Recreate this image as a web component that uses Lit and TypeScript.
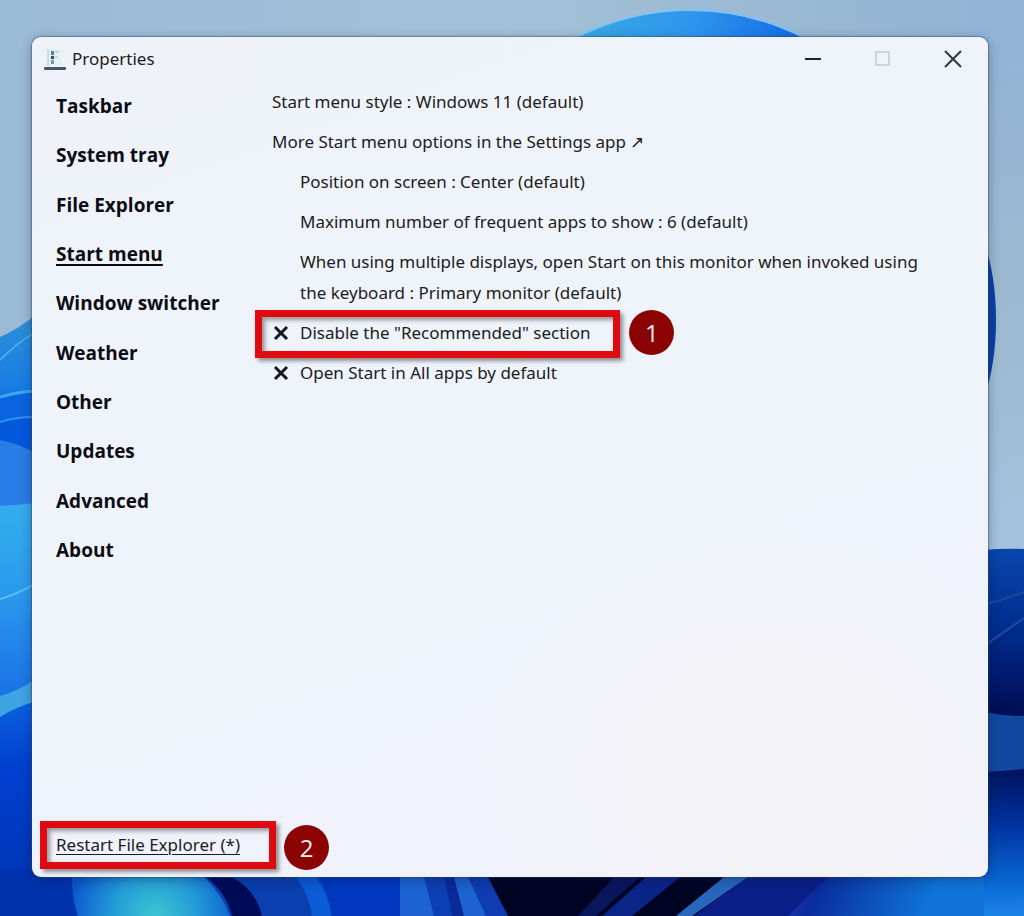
import { LitElement, html, css } from "lit";
import { customElement, state } from "lit/decorators.js";

const SECTIONS = [
  "Taskbar",
  "System tray",
  "File Explorer",
  "Start menu",
  "Window switcher",
  "Weather",
  "Other",
  "Updates",
  "Advanced",
  "About",
];

@customElement("desktop-wallpaper")
class DesktopWallpaper extends LitElement {
  static styles = css`
    :host {
      display: block;
    }
    .art {
      display: block;
      width: 100%;
      height: 100%;
    }
  `;

  render() {
    return html`<svg class="art" viewBox="0 0 1024 916" preserveAspectRatio="none" aria-hidden="true">
      <defs>
        <linearGradient id="sky" x1="0" y1="0" x2="1" y2="0">
          <stop offset="0" stop-color="#9bbad6" />
          <stop offset="0.5" stop-color="#a3c1d6" />
          <stop offset="0.8" stop-color="#98b7d2" />
          <stop offset="1" stop-color="#93b3d6" />
        </linearGradient>
        <linearGradient id="skyR" x1="0" y1="0" x2="0" y2="1">
          <stop offset="0" stop-color="#93b3d6" />
          <stop offset="0.5" stop-color="#9db9cf" />
          <stop offset="1" stop-color="#a6c2dc" />
        </linearGradient>
        <linearGradient id="dome" x1="570" y1="0" x2="810" y2="0" gradientUnits="userSpaceOnUse">
          <stop offset="0" stop-color="#38a9e0" />
          <stop offset="0.5" stop-color="#2f96ee" />
          <stop offset="1" stop-color="#1268e4" />
        </linearGradient>
        <linearGradient id="leftTop" x1="0" y1="317" x2="0" y2="420" gradientUnits="userSpaceOnUse">
          <stop offset="0" stop-color="#2f8fd4" />
          <stop offset="0.6" stop-color="#1a80e4" />
          <stop offset="1" stop-color="#0a6ae4" />
        </linearGradient>
        <linearGradient id="leftA" x1="0" y1="500" x2="0" y2="690" gradientUnits="userSpaceOnUse">
          <stop offset="0" stop-color="#35aeec" />
          <stop offset="0.45" stop-color="#2b9cec" />
          <stop offset="1" stop-color="#1b74e6" />
        </linearGradient>
        <linearGradient id="leftB" x1="0" y1="700" x2="0" y2="916" gradientUnits="userSpaceOnUse">
          <stop offset="0" stop-color="#0c62e0" />
          <stop offset="0.3" stop-color="#0040cf" />
          <stop offset="1" stop-color="#0033ad" />
        </linearGradient>
        <radialGradient id="teal" cx="155" cy="916" r="85" gradientUnits="userSpaceOnUse">
          <stop offset="0" stop-color="#3cc6d2" />
          <stop offset="0.5" stop-color="#239bd6" />
          <stop offset="1" stop-color="#0b58cf" />
        </radialGradient>
        <linearGradient id="rightA" x1="0" y1="549" x2="0" y2="716" gradientUnits="userSpaceOnUse">
          <stop offset="0" stop-color="#0a46ad" />
          <stop offset="0.5" stop-color="#002b8c" />
          <stop offset="1" stop-color="#000c52" />
        </linearGradient>
        <linearGradient id="rightB" x1="0" y1="770" x2="0" y2="916" gradientUnits="userSpaceOnUse">
          <stop offset="0" stop-color="#00135f" />
          <stop offset="0.4" stop-color="#0036a4" />
          <stop offset="0.8" stop-color="#0a6bd6" />
          <stop offset="1" stop-color="#1c85ea" />
        </linearGradient>
        <linearGradient id="bottomR" x1="790" y1="880" x2="920" y2="930" gradientUnits="userSpaceOnUse">
          <stop offset="0" stop-color="#2038b0" />
          <stop offset="0.2" stop-color="#0a2c9c" />
          <stop offset="1" stop-color="#0f74d8" />
        </linearGradient>
      </defs>
      <rect width="1024" height="916" fill="url(#sky)" />
      <rect x="980" y="36" width="44" height="520" fill="url(#skyR)" />
      <circle cx="690" cy="260" r="250" fill="url(#dome)" stroke="#7cc4f2" stroke-width="2" />
      <ellipse cx="955" cy="320" rx="41" ry="110" fill="#0b3fa6" />

      <path d="M0 337 Q18 329 34 316 V500 H0z" fill="url(#leftTop)" />
      <path d="M0 360 Q18 342 34 333" fill="none" stroke="#45b0ea" stroke-width="2" />
      <path d="M0 397 Q18 392 34 391 V510 H0z" fill="#0a64e0" />
      <path d="M0 397 Q18 392 34 391" fill="none" stroke="#3aa8ee" stroke-width="3" />
      <path d="M0 422 Q16 417 34 417 V510 H0z" fill="#0458dc" />
      <path d="M0 422 Q16 417 34 417" fill="none" stroke="#2f93ee" stroke-width="2" />
      <path d="M0 440 Q16 443 34 452 V510 H0z" fill="#2a7ce6" />
      <path d="M0 506 Q18 505 34 503 V700 H0z" fill="url(#leftA)" />
      <path d="M0 599 Q18 594 34 584" fill="none" stroke="#5cc0f2" stroke-width="2" />
      <path d="M0 714 L34 698 V916 H0z" fill="url(#leftB)" />
      <path d="M0 696 Q18 691 34 680 V702 Q18 706 0 717z" fill="#3ea5e2" />

      <rect x="0" y="870" width="1024" height="46" fill="#0033ad" />
      <path d="M72 877 Q72 900 78 916 H232 Q226 892 204 877z" fill="url(#teal)" />
      <path d="M204 877 Q222 894 230 916 H430 V870z" fill="#0a3fb0" />
      <path d="M206 877 H232 Q256 890 262 916 H232 Q226 892 206 877z" fill="#000b58" />
      <path d="M296 877 Q310 896 312 916 H332 Q328 892 316 877z" fill="#0c5bd6" />
      <path d="M318 877 Q328 892 332 916 H410 V877z" fill="#0238c0" />
      <path d="M400 877 H480 L504 916 H400z" fill="#1c62d0" />
      <path d="M424 877 H444 L452 916 H434z" fill="#0d3fb4" />
      <path d="M444 877 H454 L464 916 H452z" fill="#0a2a98" />
      <path d="M468 877 H490 L508 916 H486z" fill="#0f3bb0" />
      <path d="M488 877 H740 V916 H508z" fill="#000423" />
      <path d="M646 877 H680 L632 916 H602z" fill="#0b2488" />
      <path d="M614 877 H640 L596 916 H578z" fill="#08165c" />
      <path d="M724 877 H748 L692 916 H676z" fill="#2866bd" />
      <path d="M748 877 H830 L796 916 H694z" fill="#0a1f88" />
      <path d="M828 877 H1024 V916 H788z" fill="url(#bottomR)" />

      <path d="M984 550 Q1004 548 1024 549 V720 H984z" fill="url(#rightA)" />
      <path d="M984 605 Q1006 599 1024 592" fill="none" stroke="#1b4a9c" stroke-width="2" />
      <path d="M984 646 Q1004 632 1024 618" fill="none" stroke="#1f4c9e" stroke-width="2" />
      <path d="M984 712 Q1004 716 1024 716 V780 H984z" fill="#12479f" />
      <path d="M984 772 Q1004 771 1024 769 V916 H984z" fill="url(#rightB)" />
    </svg>`;
  }
}

@customElement("step-badge")
class StepBadge extends LitElement {
  static properties = { step: { type: Number } };
  declare step: number;

  static styles = css`
    :host {
      display: grid;
      place-items: center;
      width: 45px;
      height: 45px;
      border-radius: 50%;
      background: #8b0303;
      color: #f8eeee;
      font-family: "Open Sans", sans-serif;
      font-size: 24px;
      line-height: 24px;
    }
  `;

  render() {
    return html`${this.step}`;
  }
}

@customElement("app-root")
class AppRoot extends LitElement {
  @state() private current = "Start menu";

  static styles = css`
    :host {
      display: grid;
      min-height: 100vh;
      font-family: "Noto Sans", "Open Sans", sans-serif;
      font-size: 17px;
      color: #1b1c20;
    }
    desktop-wallpaper,
    .window {
      grid-area: 1 / 1;
    }
    desktop-wallpaper {
      min-height: 0;
      height: 100%;
    }
    button {
      font: inherit;
      color: inherit;
      background: none;
      border: 0;
      padding: 0;
      margin: 0;
      text-align: left;
      cursor: pointer;
    }
    .window {
      z-index: 1;
      margin: 37px 36px 39px 32px;
      display: flex;
      flex-direction: column;
      border-radius: 9px;
      background:
        radial-gradient(ellipse 300px 240px at 78% 88%, #f3f2f7 0%, #f3f2f7 50%, rgba(243, 242, 247, 0) 100%),
        linear-gradient(160deg, #eff3f9 0%, #eff3fa 50%, #f0f2fc 100%);
      box-shadow: 0 0 1px 1px rgba(50, 70, 90, 0.45), 0 3px 12px rgba(0, 20, 60, 0.35);
    }
    .titlebar {
      display: flex;
      align-items: center;
      height: 43px;
      padding-left: 12px;
    }
    .app-icon {
      width: 22px;
      height: 24px;
      margin-right: 6px;
    }
    .title {
      flex: 1;
      margin: 0;
      font-size: 17px;
      font-weight: 400;
    }
    .caption {
      display: grid;
      place-items: center;
      width: 70px;
      height: 43px;
    }
    .body {
      flex: 1;
      display: grid;
      grid-template-columns: 216px 1fr;
      padding: 0 44px 0 24px;
    }
    .nav {
      display: flex;
      flex-direction: column;
      justify-content: space-between;
      align-items: flex-start;
      height: 470px;
      margin-top: 13px;
      font-family: "Open Sans", "Noto Sans", sans-serif;
      font-size: 19px;
      line-height: 26px;
      font-weight: 700;
      color: #0c0d12;
    }
    .nav .current,
    .restart {
      text-decoration: underline;
      text-underline-offset: 3px;
      text-decoration-thickness: 2px;
    }
    .options {
      display: flex;
      flex-direction: column;
      align-items: flex-start;
      gap: 9px;
      margin-top: 6px;
      line-height: 31px;
    }
    .sub {
      padding-left: 28px;
    }
    .toggle {
      display: grid;
      grid-template-columns: 28px 1fr;
      align-items: center;
    }
    .marked {
      position: relative;
    }
    .frame {
      position: absolute;
      border: 7px solid #df0a10;
      box-shadow: 3px 3px 4px rgba(60, 60, 60, 0.55), inset 3px 3px 4px rgba(60, 60, 60, 0.5);
      pointer-events: none;
    }
    .frame-option {
      inset: -7px -30px -10px -17px;
    }
    .frame-restart {
      inset: -10px -36px -11px -16px;
    }
    .marked step-badge {
      position: absolute;
      left: calc(100% + 39px);
      top: -7px;
    }
    .footer step-badge {
      left: calc(100% + 44px);
      top: -6px;
    }
    .footer {
      display: flex;
      padding: 0 24px 19px;
    }
    .restart {
      line-height: 27px;
      text-decoration-thickness: 1px;
    }
  `;

  private cross() {
    return html`<svg width="18" height="18" viewBox="0 0 18 18" fill="none" stroke="#17181c" stroke-width="3" aria-hidden="true">
      <path d="M3 3 L15 15 M15 3 L3 15" />
    </svg>`;
  }

  render() {
    return html`
      <desktop-wallpaper></desktop-wallpaper>
      <main class="window">
        <header class="titlebar">
          <svg class="app-icon" viewBox="0 0 22 24" aria-hidden="true">
            <rect x="4" y="2" width="14" height="17" fill="#e6f1f5" />
            <path d="M4 2V19" stroke="#a9c4cf" stroke-width="1" />
            <rect x="7" y="4" width="3" height="4" fill="#4f8794" />
            <rect x="7" y="9" width="3" height="3" fill="#35515c" />
            <rect x="7" y="13" width="3" height="4" fill="#6f9aa6" />
            <path d="M11 5H15 M11 10H14" stroke="#9fc0ca" />
            <rect x="0" y="20" width="22" height="3" rx="1" fill="#4b5561" />
          </svg>
          <h1 class="title">Properties</h1>
          <button class="caption" aria-label="Minimize">
            <svg width="18" height="18" viewBox="0 0 18 18" aria-hidden="true"><path d="M1 9H17" stroke="#202226" stroke-width="2" /></svg>
          </button>
          <button class="caption" aria-label="Maximize" disabled>
            <svg width="18" height="18" viewBox="0 0 18 18" fill="none" aria-hidden="true"><rect x="2" y="2" width="13" height="13" stroke="#c6c8cd" stroke-width="1.5" /></svg>
          </button>
          <button class="caption" aria-label="Close">
            <svg width="18" height="18" viewBox="0 0 18 18" fill="none" aria-hidden="true"><path d="M1 1L17 17M17 1L1 17" stroke="#33353a" stroke-width="2" /></svg>
          </button>
        </header>
        <div class="body">
          <nav class="nav">
            ${SECTIONS.map(
              (name) => html`<button class=${name === this.current ? "current" : ""} @click=${() => (this.current = name)}>${name}</button>`
            )}
          </nav>
          <section class="options">
            <button>Start menu style : Windows 11 (default)</button>
            <button>More Start menu options in the Settings app ↗</button>
            <button class="sub">Position on screen : Center (default)</button>
            <button class="sub">Maximum number of frequent apps to show : 6 (default)</button>
            <button class="sub">When using multiple displays, open Start on this monitor when invoked using the keyboard : Primary monitor (default)</button>
            <div class="marked">
              <button class="toggle">${this.cross()}<span>Disable the "Recommended" section</span></button>
              <div class="frame frame-option"></div>
              <step-badge .step=${1}></step-badge>
            </div>
            <button class="toggle">${this.cross()}<span>Open Start in All apps by default</span></button>
          </section>
        </div>
        <footer class="footer">
          <div class="marked">
            <button class="restart">Restart File Explorer (*)</button>
            <div class="frame frame-restart"></div>
            <step-badge .step=${2}></step-badge>
          </div>
        </footer>
      </main>
    `;
  }
}
